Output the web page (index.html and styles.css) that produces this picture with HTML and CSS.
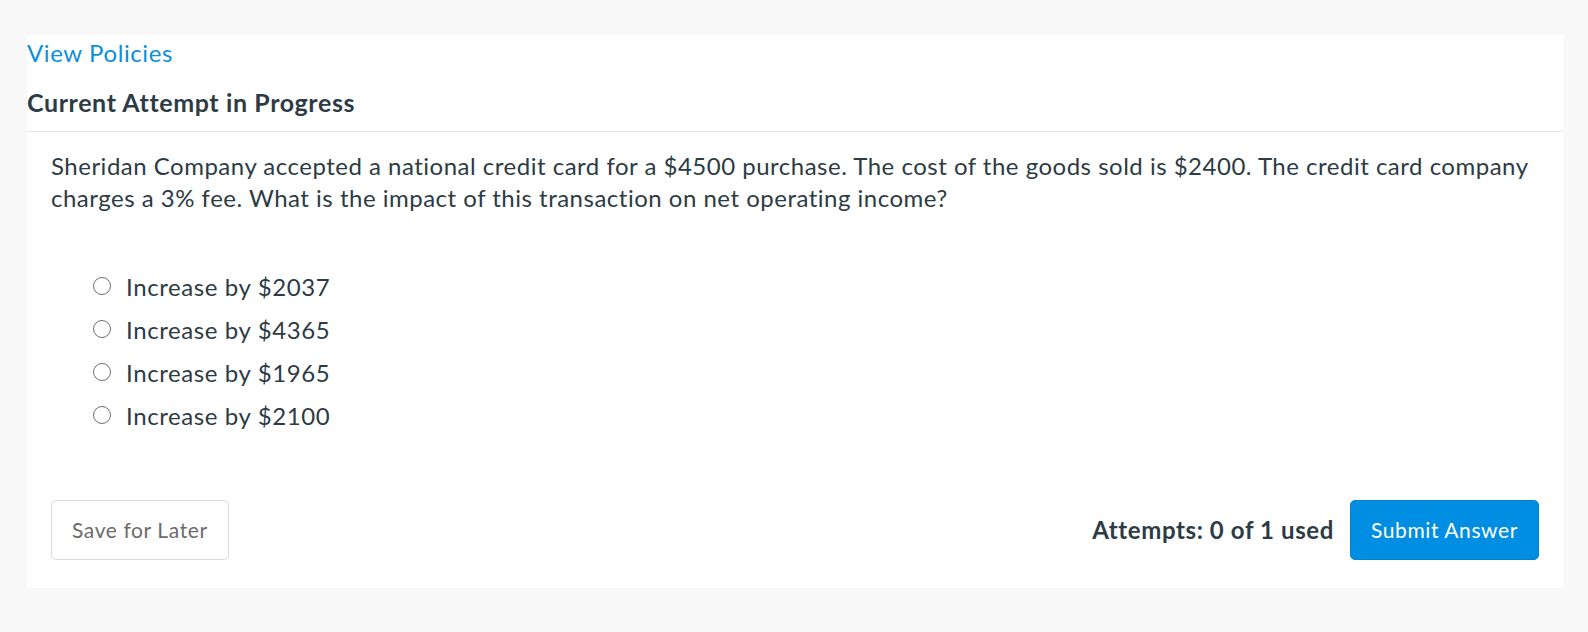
FILE: index.html
```html
<!DOCTYPE html>
<html lang="en">
<head>
<meta charset="utf-8">
<title>Current Attempt in Progress</title>
<link rel="stylesheet" href="styles.css">
</head>
<body>
<div class="panel">
  <a class="policies" href="#">View Policies</a>
  <h2 class="attempt-title">Current Attempt in Progress</h2>
  <div class="question">
    <p class="prompt">Sheridan Company accepted a national credit card for a $4500 purchase. The cost of the goods sold is $2400. The credit card company charges a 3% fee. What is the impact of this transaction on net operating income?</p>
    <ul class="options">
      <li class="option"><span class="radio"></span><span class="label">Increase by $2037</span></li>
      <li class="option"><span class="radio"></span><span class="label">Increase by $4365</span></li>
      <li class="option"><span class="radio"></span><span class="label">Increase by $1965</span></li>
      <li class="option"><span class="radio"></span><span class="label">Increase by $2100</span></li>
    </ul>
    <div class="actions">
      <button class="btn btn-secondary" type="button">Save for Later</button>
      <div class="submit-group">
        <span class="attempts">Attempts: 0 of 1 used</span>
        <button class="btn btn-primary" type="button">Submit Answer</button>
      </div>
    </div>
  </div>
</div>
</body>
</html>
```
FILE: styles.css
```css
html, body {
  margin: 0;
  padding: 0;
}
body {
  background: #f8f8f8;
  font-family: Lato, "Open Sans", "Liberation Sans", sans-serif;
  color: #2d3b45;
  letter-spacing: 0.6px;
}
.panel {
  margin: 35px 25px 0 27px;
  background: #ffffff;
}
.policies {
  display: block;
  padding-top: 4px;
  font-size: 24px;
  line-height: 27.6px;
  color: #0a8fdd;
  text-decoration: none;
}
.attempt-title {
  margin: 0;
  padding: 20px 0 14px;
  font-size: 25px;
  line-height: 30px;
  font-weight: 700;
  border-bottom: 1px solid #e8e8e8;
}
.question {
  padding: 18px 24px 28px;
}
.prompt {
  margin: 0 -10px 0 0;
  font-size: 24px;
  line-height: 32px;
  letter-spacing: 0.5px;
}
.options {
  list-style: none;
  margin: 51px 0 0;
  padding: 0 0 0 42px;
}
.option {
  display: flex;
  align-items: center;
  height: 43px;
  font-size: 24px;
}
.radio {
  box-sizing: border-box;
  width: 18px;
  height: 18px;
  border: 1.5px solid #6f6f6f;
  border-radius: 50%;
  margin-right: 15px;
  flex: none;
}
.actions {
  display: flex;
  justify-content: space-between;
  align-items: center;
  margin-top: 63px;
}
.submit-group {
  display: flex;
  align-items: center;
  gap: 16px;
}
.attempts {
  font-size: 24px;
  font-weight: 700;
}
.btn {
  font-family: inherit;
  font-size: 21px;
  letter-spacing: 0.6px;
  height: 60px;
  padding: 0 20px;
  border-radius: 5px;
  cursor: pointer;
}
.btn-secondary {
  background: #ffffff;
  color: #6b6b6b;
  border: 1px solid #d9d9d9;
}
.btn-primary {
  background: #008ee2;
  color: #ffffff;
  border: 1px solid #0083d0;
}
```
